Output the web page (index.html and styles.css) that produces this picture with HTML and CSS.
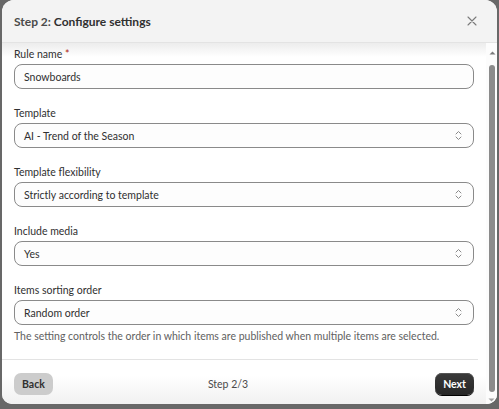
FILE: index.html
```html
<!DOCTYPE html>
<html lang="en">
<head>
<meta charset="utf-8">
<title>Configure settings</title>
<link rel="stylesheet" href="styles.css">
</head>
<body>
<div class="modal">
  <div class="modal-header">
    <h2 class="modal-title"><span class="step-prefix">Step 2:</span> Configure settings</h2>
    <button class="close-btn" aria-label="Close">
      <svg width="10" height="10" viewBox="0 0 10 10"><path d="M1 1 L9 9 M9 1 L1 9" stroke="#7a7a7a" stroke-width="1.1" fill="none" stroke-linecap="round"/></svg>
    </button>
  </div>
  <div class="modal-body">
    <div class="scroll-content">
      <div class="form">
        <div class="field">
          <label class="label">Rule name <span class="required">*</span></label>
          <div class="control"><span class="value">Snowboards</span></div>
        </div>
        <div class="field">
          <label class="label">Template</label>
          <div class="control select"><span class="value">AI - Trend of the Season</span><svg class="chev" width="7" height="11" viewBox="0 0 7 11"><path d="M1 4 L3.5 1.5 L6 4 M1 7 L3.5 9.5 L6 7" stroke="#8a8a8a" stroke-width="1" fill="none" stroke-linecap="round" stroke-linejoin="round"/></svg></div>
        </div>
        <div class="field">
          <label class="label">Template flexibility</label>
          <div class="control select"><span class="value">Strictly according to template</span><svg class="chev" width="7" height="11" viewBox="0 0 7 11"><path d="M1 4 L3.5 1.5 L6 4 M1 7 L3.5 9.5 L6 7" stroke="#8a8a8a" stroke-width="1" fill="none" stroke-linecap="round" stroke-linejoin="round"/></svg></div>
        </div>
        <div class="field">
          <label class="label">Include media</label>
          <div class="control select"><span class="value">Yes</span><svg class="chev" width="7" height="11" viewBox="0 0 7 11"><path d="M1 4 L3.5 1.5 L6 4 M1 7 L3.5 9.5 L6 7" stroke="#8a8a8a" stroke-width="1" fill="none" stroke-linecap="round" stroke-linejoin="round"/></svg></div>
        </div>
        <div class="field">
          <label class="label">Items sorting order</label>
          <div class="control select"><span class="value">Random order</span><svg class="chev" width="7" height="11" viewBox="0 0 7 11"><path d="M1 4 L3.5 1.5 L6 4 M1 7 L3.5 9.5 L6 7" stroke="#8a8a8a" stroke-width="1" fill="none" stroke-linecap="round" stroke-linejoin="round"/></svg></div>
          <p class="help">The setting controls the order in which items are published when multiple items are selected.</p>
        </div>
      </div>
      <div class="divider"></div>
      <div class="footer">
        <button class="btn btn-back">Back</button>
        <span class="step-indicator">Step 2/3</span>
        <button class="btn btn-next">Next</button>
      </div>
    </div>
    <div class="scrollbar" aria-hidden="true">
      <div class="sb-arrow sb-up"><svg width="7" height="4" viewBox="0 0 7 4"><path d="M0.5 3.5 L3.5 0.5 L6.5 3.5 Z" fill="#7a7a7a"/></svg></div>
      <div class="sb-thumb"></div>
      <div class="sb-arrow sb-down"><svg width="7" height="4" viewBox="0 0 7 4"><path d="M0.5 0.5 L3.5 3.5 L6.5 0.5 Z" fill="#a0a0a0"/></svg></div>
    </div>
  </div>
</div>
</body>
</html>
```

FILE: styles.css
```css
html, body {
  margin: 0;
  padding: 0;
}
body {
  background: #686868;
  width: 499px;
  height: 409px;
  overflow: hidden;
  font-family: "Lato", "Noto Sans", sans-serif;
  font-size: 10.5px;
  color: #303030;
}
.modal {
  margin-left: 2px;
  width: 495px;
  height: 404px;
  background: #ffffff;
  border-radius: 12px 12px 10px 10px;
  overflow: hidden;
  display: flex;
  flex-direction: column;
}
.modal-header {
  flex: none;
  height: 42px;
  background: #f3f3f3;
  border-bottom: 1px solid #e3e3e3;
  display: flex;
  align-items: center;
  justify-content: space-between;
  padding: 0 12px 0 12px;
}
.modal-title {
  margin: 0;
  font-size: 12px;
  font-weight: 700;
  color: #303030;
}
.step-prefix {
  color: #4a4a4a;
}
.close-btn {
  border: 0;
  background: transparent;
  padding: 0;
  width: 16px;
  height: 16px;
  display: flex;
  align-items: center;
  justify-content: center;
  margin-right: 5px;
}
.modal-body {
  flex: 1;
  min-height: 0;
  display: flex;
  background: linear-gradient(#ececec, #ffffff 14px, #ffffff 92%, #f1f1f1);
}
.scroll-content {
  flex: 1;
  min-width: 0;
}
.scrollbar {
  flex: none;
  width: 11px;
  display: flex;
  flex-direction: column;
  align-items: center;
  background: #fcfcfc;
}
.sb-arrow {
  display: flex;
  justify-content: center;
}
.sb-up {
  height: 20px;
  align-items: center;
  padding-left: 1px;
}
.sb-thumb {
  flex: 1;
  width: 6px;
  margin: 2px 0 6px 1px;
  border-radius: 3px;
  background: #8b8b8b;
}
.sb-down {
  height: 6px;
  align-items: flex-start;
}
.form {
  padding: 3px 12px 0 12px;
  display: flex;
  flex-direction: column;
  gap: 16px;
}
.field {
  display: flex;
  flex-direction: column;
}
.label {
  display: block;
  line-height: 16px;
  margin-bottom: 2px;
  color: #303030;
}
.required {
  color: #b0220e;
}
.control {
  box-sizing: border-box;
  height: 25px;
  border: 1px solid #8a8a8a;
  border-radius: 8px;
  background: #fdfdfd;
  display: flex;
  align-items: center;
  justify-content: space-between;
  padding: 0 10px 0 9px;
}
.value {
  color: #303030;
}
.chev {
  display: block;
  margin-right: 1px;
}
.help {
  margin: 4px 0 0 0;
  line-height: 14px;
  color: #616161;
}
.divider {
  height: 1px;
  background: #e3e3e3;
  margin: 16px 8px 0 0;
}
.footer {
  display: flex;
  align-items: center;
  padding: 13px 12px 12px 12px;
}
.btn {
  font-family: inherit;
  font-size: 10.5px;
  font-weight: 700;
  border: 0;
  height: 22px;
  border-radius: 7px;
  padding: 0 8px;
}
.btn-back {
  background: #cccccc;
  color: #303030;
}
.btn-next {
  background: linear-gradient(#3a3a3a, #262626);
  color: #ffffff;
  box-shadow: 0 1px 0 #000, inset 0 1px 0 #555;
}
.step-indicator {
  flex: 1;
  text-align: center;
  padding-right: 32px;
  color: #4a4a4a;
}
```
